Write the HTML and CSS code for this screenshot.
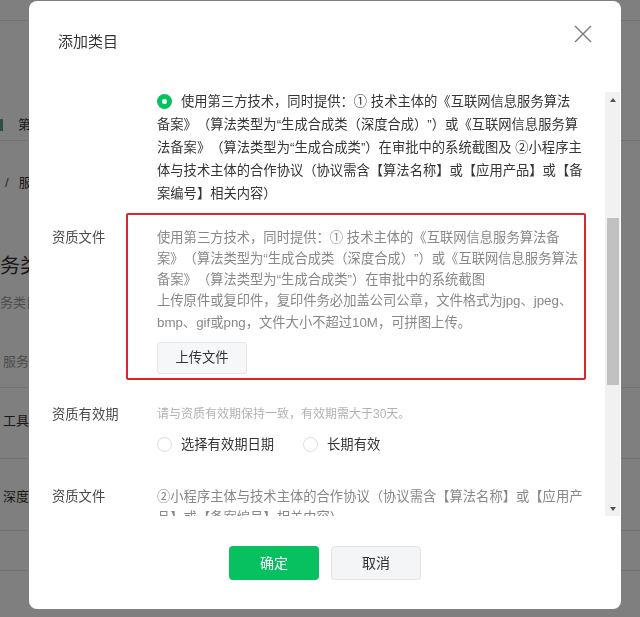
FILE: index.html
```html
<!DOCTYPE html>
<html lang="zh-CN">
<head>
<meta charset="utf-8">
<title>添加类目</title>
<link rel="stylesheet" href="styles.css">
</head>
<body>
<div class="page">
  <div class="page-top"></div>
  <div class="page-tabs"><span class="tab-mark"></span><span class="tab">第三方</span></div>
  <div class="page-crumb"><span class="crumb-sep">/</span><span>服务类目</span></div>
  <div class="page-title">务类目</div>
  <div class="page-sub">务类目</div>
  <div class="page-list">
    <div class="page-row row-a gray">服务</div>
    <div class="page-row row-b">工具</div>
    <div class="page-row row-c">深度</div>
    <div class="page-row row-d"></div>
  </div>
</div>

<div class="mask">
  <div class="dialog">
    <div class="dlg-head">
      <div class="dlg-title">添加类目</div>
      <svg class="dlg-close" viewBox="0 0 18 18" width="18" height="18" aria-label="关闭">
        <path d="M1 1 L17 17 M17 1 L1 17" stroke="#7a7a7a" stroke-width="1.4" fill="none"/>
      </svg>
    </div>

    <div class="dlg-body">
      <div class="dlg-content">
        <div class="form-row opt-row">
          <div class="form-label"></div>
          <div class="form-field opt-text"><span class="radio checked"></span>使用第三方技术，同时提供：① 技术主体的《互联网信息服务算法<br>备案》（算法类型为“生成合成类（深度合成）”）或《互联网信息服务算<br>法备案》（算法类型为“生成合成类”）在审批中的系统截图及 ②小程序主<br>体与技术主体的合作协议（协议需含【算法名称】或【应用产品】或【备<br>案编号】相关内容）</div>
        </div>

        <div class="form-row file-row">
          <div class="form-label label-boxed">资质文件</div>
          <div class="form-field">
            <div class="highlight">
              <div class="desc">使用第三方技术，同时提供：① 技术主体的《互联网信息服务算法备<br>案》（算法类型为“生成合成类（深度合成）”）或《互联网信息服务算法<br>备案》（算法类型为“生成合成类”）在审批中的系统截图<br>上传原件或复印件，复印件务必加盖公司公章，文件格式为jpg、jpeg、<br>bmp、gif或png，文件大小不超过10M，可拼图上传。</div>
              <div class="btn-upload">上传文件</div>
            </div>
          </div>
        </div>

        <div class="form-row valid-row">
          <div class="form-label">资质有效期</div>
          <div class="form-field">
            <div class="hint">请与资质有效期保持一致，有效期需大于30天。</div>
            <div class="radio-group">
              <label class="radio-item"><span class="radio"></span>选择有效期日期</label>
              <label class="radio-item"><span class="radio"></span>长期有效</label>
            </div>
          </div>
        </div>

        <div class="form-row file-row2">
          <div class="form-label">资质文件</div>
          <div class="form-field desc">②小程序主体与技术主体的合作协议（协议需含【算法名称】或【应用产<br>品】或【备案编号】相关内容）</div>
        </div>
      </div>

      <div class="scrollbar">
        <div class="sb-btn"><span class="sb-arrow up"></span></div>
        <div class="sb-track"><div class="sb-thumb"></div></div>
        <div class="sb-btn"><span class="sb-arrow down"></span></div>
      </div>
    </div>

    <div class="dlg-foot">
      <div class="btn btn-primary">确定</div>
      <div class="btn btn-default">取消</div>
    </div>
  </div>
</div>
</body>
</html>
```

FILE: styles.css
```css
* {
  box-sizing: border-box;
  margin: 0;
  padding: 0;
}

html, body {
  width: 640px;
  height: 617px;
  overflow: hidden;
}

body {
  font-family: "Liberation Sans", "Noto Sans CJK SC", sans-serif;
  background: #fff;
  color: #333;
  text-spacing-trim: space-all;
}

/* ---------- page behind the modal ---------- */
.page {
  font-size: 13px;
  color: #333;
  white-space: nowrap;
}

.page-top {
  height: 21px;
  border-bottom: 1px solid #e4e4e4;
}

.page-tabs {
  height: 120px;
  padding-top: 94px;
  line-height: 20px;
  font-size: 13px;
  border-bottom: 1px solid #e4e4e4;
  display: flex;
  align-items: flex-start;
}

.tab-mark {
  width: 3px;
  height: 12px;
  margin-top: 4px;
  margin-right: 15px;
  background: #0f7a48;
  opacity: 0.7;
}

.page-crumb {
  height: 52px;
  padding-top: 32px;
  line-height: 20px;
  font-size: 13px;
}

.crumb-sep {
  margin-left: 5px;
  margin-right: 10px;
  color: #555;
}

.page-title {
  margin-top: 59px;
  font-size: 20px;
  line-height: 28px;
}

.page-sub {
  margin-top: 14px;
  font-size: 13px;
  line-height: 18px;
  color: #999;
}

.page-row {
  border-bottom: 1px solid #e4e4e4;
  line-height: 18px;
  padding-left: 3px;
  font-size: 13px;
}

.page-row.gray { color: #999; }
.row-a { height: 76px; padding-top: 41px; }
.row-b { height: 71px; padding-top: 24px; }
.row-c { height: 72px; padding-top: 29px; }
.row-d { height: 40px; }

/* ---------- modal ---------- */
.mask {
  position: fixed;
  inset: 0;
  background: rgba(0, 0, 0, 0.5);
  padding: 1px 0 0 29px;
}

.dialog {
  width: 592px;
  height: 608px;
  background: #fff;
  border-radius: 8px;
  display: flex;
  flex-direction: column;
  overflow: hidden;
}

.dlg-head {
  height: 90px;
  flex: none;
  display: flex;
  justify-content: space-between;
  align-items: flex-start;
  padding: 0 29px 0 29px;
}

.dlg-title {
  margin-top: 30px;
  font-size: 15px;
  line-height: 22px;
  color: #353535;
}

.dlg-close {
  margin-top: 24px;
  display: block;
}

.dlg-body {
  height: 425px;
  flex: none;
  display: flex;
}

.dlg-content {
  flex: 1;
  overflow: hidden;
  padding-left: 23px;
  font-size: 13.3px;
}

.form-row {
  display: flex;
}

.form-label {
  width: 105px;
  flex: none;
  color: #4a4a4a;
  line-height: 21.25px;
  white-space: nowrap;
}

.form-field {
  flex: 1;
  white-space: nowrap;
}

.opt-row {
  margin-top: -1px;
}

.opt-text {
  line-height: 23px;
  color: #353535;
}

.radio {
  display: inline-block;
  width: 15px;
  height: 15px;
  border-radius: 50%;
  border: 1px solid #dcdcdc;
  background: #fff;
  vertical-align: top;
  margin-top: 4px;
  margin-right: 9px;
  position: relative;
}

.radio.checked {
  border: none;
  background: #07c160;
}

.radio.checked::after {
  content: "";
  position: absolute;
  left: 5px;
  top: 5px;
  width: 5px;
  height: 5px;
  border-radius: 50%;
  background: #fff;
}

.file-row {
  margin-top: 7.5px;
}

.label-boxed {
  padding-top: 14px;
}

.highlight {
  margin-left: -31px;
  width: 460px;
  border: 2px solid #d8262c;
  border-radius: 2px;
  padding: 12px 0 4px 29px;
}

.desc {
  color: #888;
  line-height: 21.25px;
}

.btn-upload {
  margin-top: 9px;
  width: 90px;
  height: 32px;
  line-height: 30px;
  text-align: center;
  background: #f6f7f8;
  border: 1px solid #e6e6e6;
  border-radius: 3px;
  color: #333;
}

.valid-row {
  margin-top: 24px;
}

.hint {
  color: #b2b2b2;
  font-size: 12px;
  line-height: 21.25px;
}

.radio-group {
  display: flex;
  margin-top: 8.5px;
  height: 22px;
  line-height: 22px;
}

.radio-group .radio {
  margin-top: 3.5px;
}

.radio-item {
  display: flex;
  align-items: flex-start;
  color: #333;
}

.radio-item + .radio-item {
  margin-left: 29px;
}

.file-row2 {
  margin-top: 30.5px;
}

/* fake scrollbar */
.scrollbar {
  width: 15px;
  flex: none;
  margin: 1px 1px 0 0;
  height: 424px;
  background: #f1f1f1;
  display: flex;
  flex-direction: column;
}

.sb-btn {
  height: 15px;
  flex: none;
  display: flex;
  align-items: center;
  justify-content: center;
}

.sb-arrow {
  width: 0;
  height: 0;
  border-left: 3.5px solid transparent;
  border-right: 3.5px solid transparent;
}

.sb-arrow.up { border-bottom: 4px solid #505050; }
.sb-arrow.down { border-top: 4px solid #505050; }

.sb-track {
  flex: 1;
}

.sb-thumb {
  margin: 111px 1px 0 2px;
  height: 167px;
  background: #c1c1c1;
}

/* footer */
.dlg-foot {
  flex: none;
  display: flex;
  justify-content: center;
  gap: 12px;
  padding-top: 30px;
}

.btn {
  width: 90px;
  height: 34px;
  line-height: 34px;
  text-align: center;
  border-radius: 4px;
  font-size: 14px;
}

.btn-primary {
  background: #07c160;
  color: #fff;
}

.btn-default {
  background: #f4f5f6;
  border: 1px solid #e3e3e3;
  line-height: 32px;
  color: #333;
}
```
